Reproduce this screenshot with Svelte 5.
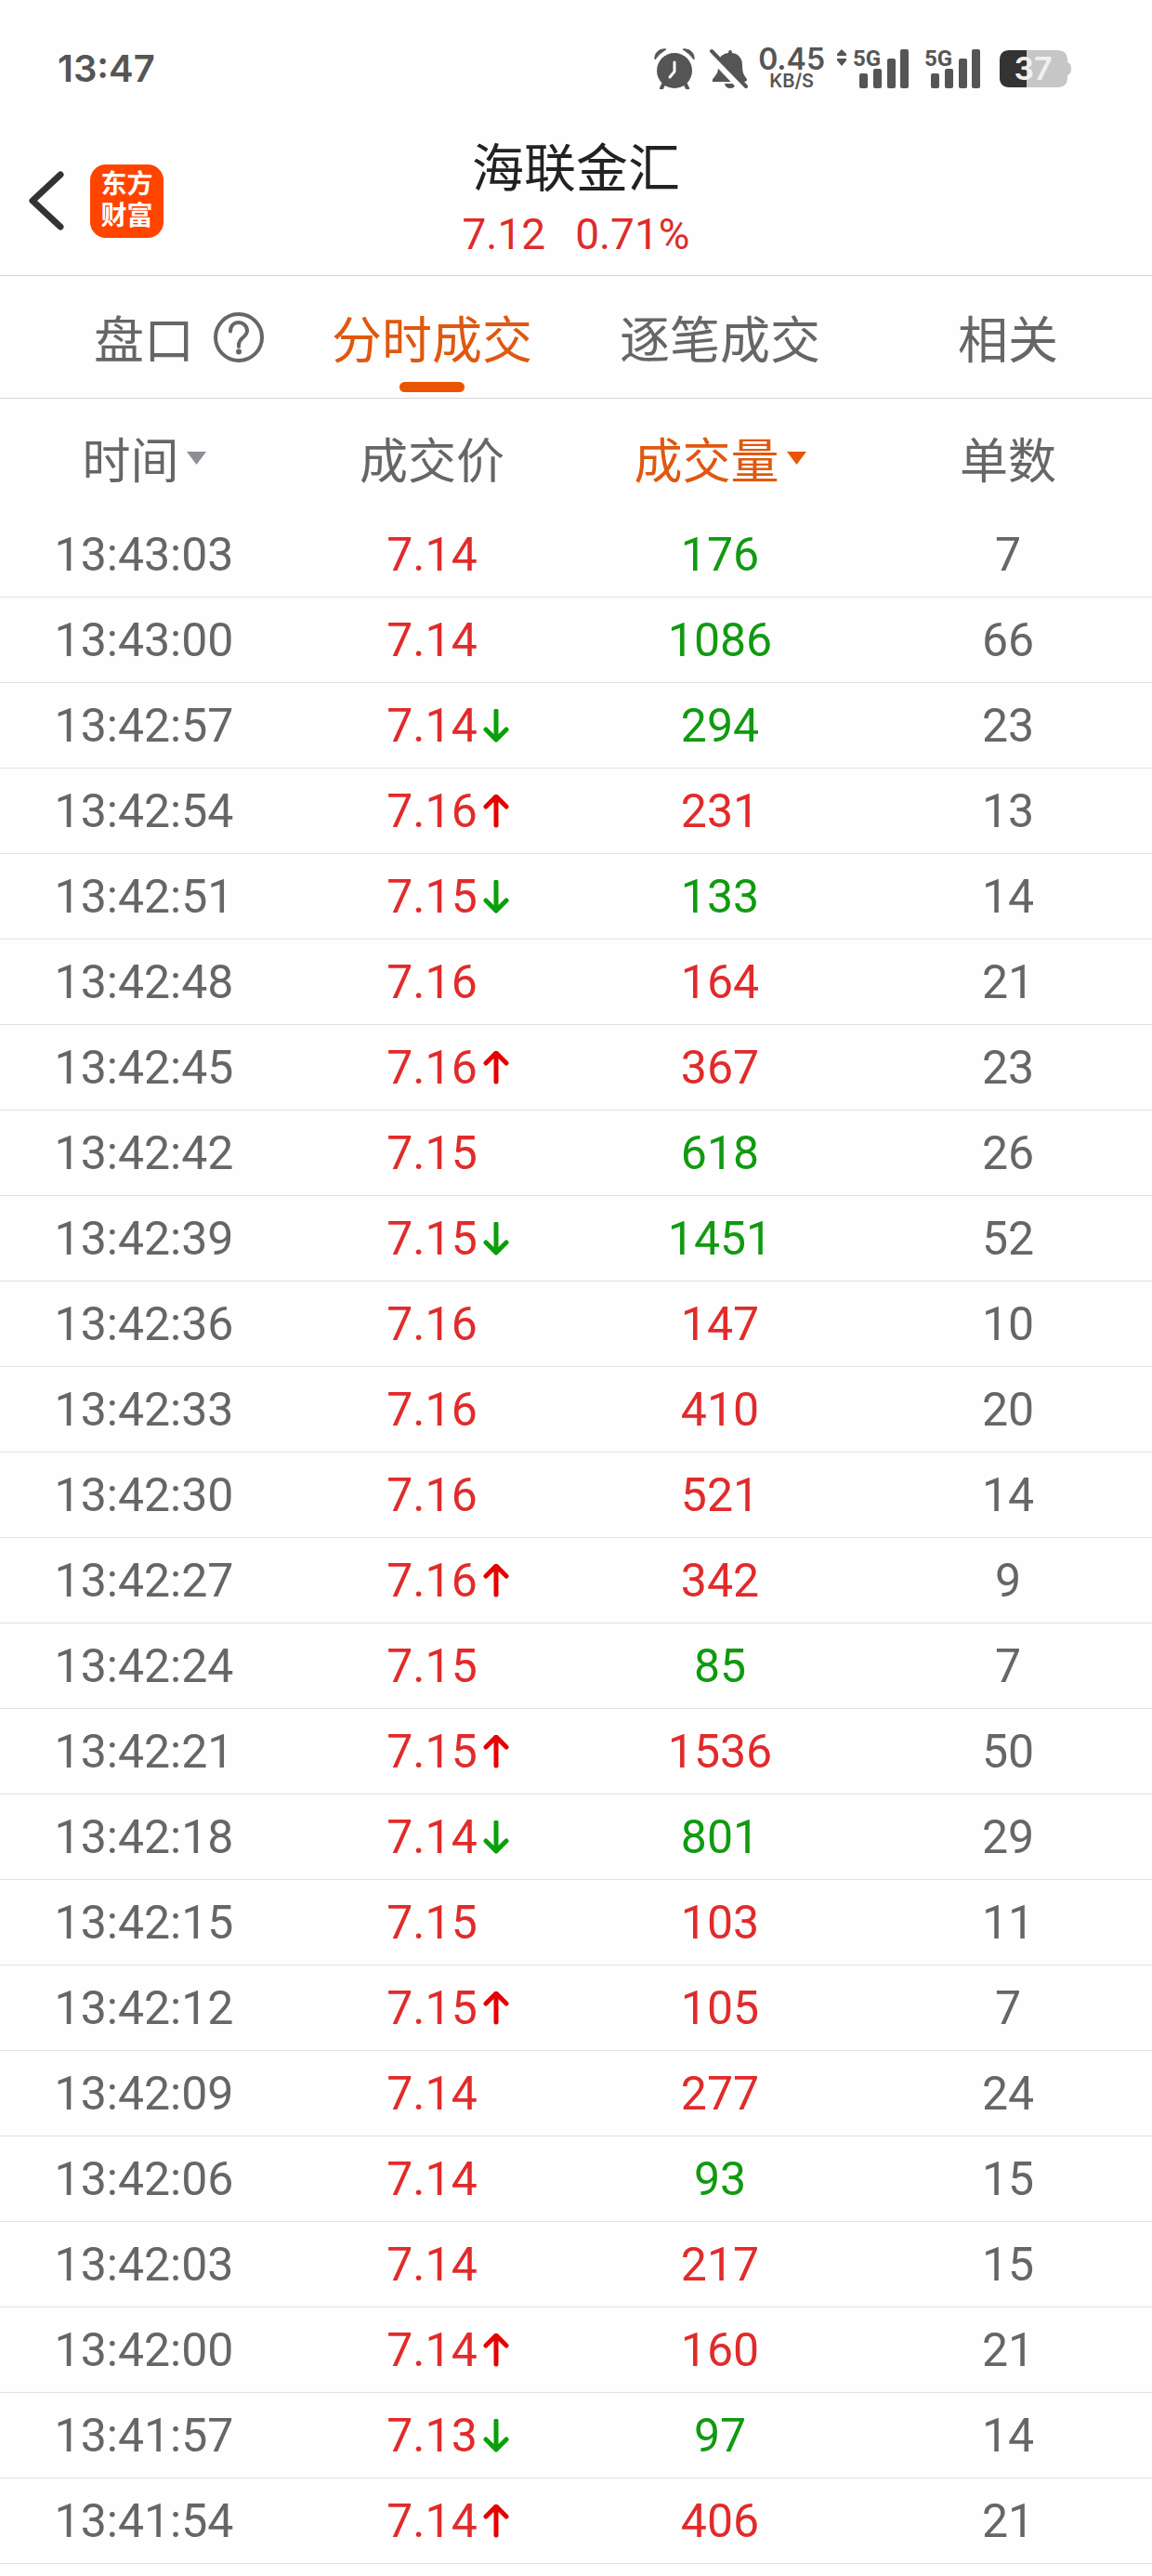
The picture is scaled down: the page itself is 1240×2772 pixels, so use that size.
<script lang="ts">
  type Side = 'buy' | 'sell';
  type Trend = 'up' | 'down' | '';

  interface Trade {
    time: string;
    price: string;
    trend: Trend;
    volume: number;
    side: Side;
    count: number;
  }

  const stock = { name: '海联金汇', price: '7.12', change: '0.71%' };

  const tabs = [
    { id: 'quote', label: '盘口', help: true },
    { id: 'minute', label: '分时成交', help: false },
    { id: 'tick', label: '逐笔成交', help: false },
    { id: 'related', label: '相关', help: false },
  ];

  let activeTab = $state('minute');

  function row(time: string, price: string, trend: Trend, volume: number, side: Side, count: number): Trade {
    return { time, price, trend, volume, side, count };
  }

  const trades: Trade[] = [
    row('13:43:03', '7.14', '', 176, 'sell', 7),
    row('13:43:00', '7.14', '', 1086, 'sell', 66),
    row('13:42:57', '7.14', 'down', 294, 'sell', 23),
    row('13:42:54', '7.16', 'up', 231, 'buy', 13),
    row('13:42:51', '7.15', 'down', 133, 'sell', 14),
    row('13:42:48', '7.16', '', 164, 'buy', 21),
    row('13:42:45', '7.16', 'up', 367, 'buy', 23),
    row('13:42:42', '7.15', '', 618, 'sell', 26),
    row('13:42:39', '7.15', 'down', 1451, 'sell', 52),
    row('13:42:36', '7.16', '', 147, 'buy', 10),
    row('13:42:33', '7.16', '', 410, 'buy', 20),
    row('13:42:30', '7.16', '', 521, 'buy', 14),
    row('13:42:27', '7.16', 'up', 342, 'buy', 9),
    row('13:42:24', '7.15', '', 85, 'sell', 7),
    row('13:42:21', '7.15', 'up', 1536, 'buy', 50),
    row('13:42:18', '7.14', 'down', 801, 'sell', 29),
    row('13:42:15', '7.15', '', 103, 'buy', 11),
    row('13:42:12', '7.15', 'up', 105, 'buy', 7),
    row('13:42:09', '7.14', '', 277, 'buy', 24),
    row('13:42:06', '7.14', '', 93, 'sell', 15),
    row('13:42:03', '7.14', '', 217, 'buy', 15),
    row('13:42:00', '7.14', 'up', 160, 'buy', 21),
    row('13:41:57', '7.13', 'down', 97, 'sell', 14),
    row('13:41:54', '7.14', 'up', 406, 'buy', 21),
  ];
</script>

{#snippet signal()}
  <svg class="signal" width="61" height="52" viewBox="0 -4 61 52" aria-hidden="true">
    <text x="0" y="19">5G</text>
    <rect x="7" y="27" width="9" height="16" rx="2" />
    <rect x="22" y="22" width="9" height="21" rx="2" />
    <rect x="37" y="11" width="9" height="32" rx="2" />
    <rect x="51" y="1" width="9" height="42" rx="2" />
  </svg>
{/snippet}

<div class="page">
  <div class="status-bar">
    <span class="clock">13:47</span>
    <div class="status-icons">
      <svg class="alarm" width="44" height="44" viewBox="0 0 44 44" aria-hidden="true">
        <path d="M1 12C0 5 6 0 13 1Q6 5 1 12ZM43 12C44 5 38 0 31 1Q38 5 43 12Z" stroke="#555" stroke-width="1" stroke-linejoin="round" />
        <circle cx="22" cy="24" r="19" />
        <path d="M11 37l-3 6M33 37l3 6" stroke="#555" stroke-width="4" stroke-linecap="round" />
        <path d="M22 15v10l-5 6" fill="none" stroke="#fefefe" stroke-width="3" stroke-linecap="round" stroke-linejoin="round" />
      </svg>
      <svg class="bell" width="42" height="44" viewBox="0 0 42 44" aria-hidden="true">
        <path d="M22 2q2 0 2 3c8 1 11 7 11 13 0 9 2 11 5 15q0 3-3 3H3q-1-2 1-4c5-6 5-7 5-15C9 10 13 6 20 5q0-3 2-3Z" />
        <path d="M16 38h12q-1 5-6 5t-6-5Z" />
        <path d="M-1 6L35 44" stroke="#fefefe" stroke-width="7" />
        <path d="M2 3L39 41" stroke="#555" stroke-width="4" stroke-linecap="round" />
      </svg>
      <div class="net-speed">
        <span class="net-value">0.45</span>
        <span class="net-unit">KB/S</span>
      </div>
      <div class="mobile">
        <svg class="updown" width="12" height="44" viewBox="0 0 12 44" aria-hidden="true">
          <path d="M6 1l5 5v2H1V6ZM6 19l5-6v-2H1v2Z" />
        </svg>
        {@render signal()}
      </div>
      {@render signal()}
      <svg class="battery" width="78" height="40" viewBox="0 0 78 40" role="img" aria-label="37">
        <path d="M11 0H62Q73 0 73 11V13Q77 14 77 20T73 27V29Q73 40 62 40H11Q0 40 0 29V11Q0 0 11 0Z" fill="#c6c6c6" />
        <path d="M11 0H29V40H11Q0 40 0 29V11Q0 0 11 0Z" fill="#333" />
        <text x="36" y="32" text-anchor="middle">37</text>
      </svg>
    </div>
  </div>

  <header class="header">
    <div class="header-left">
      <button class="back" aria-label="返回">
        <svg width="38" height="64" viewBox="0 0 38 64" aria-hidden="true">
          <path d="M34 4L4 32l30 28" />
        </svg>
      </button>
      <a class="logo" href="#home"><span>东方</span><span>财富</span></a>
    </div>
    <div class="stock">
      <h1 class="stock-name">{stock.name}</h1>
      <div class="stock-quote">
        <span>{stock.price}</span>
        <span>{stock.change}</span>
      </div>
    </div>
  </header>

  <nav class="tabs">
    {#each tabs as tab (tab.id)}
      <button class="tab" class:active={activeTab === tab.id} onclick={() => (activeTab = tab.id)}>
        <span class="tab-label">{tab.label}</span>
        {#if tab.help}
          <svg class="help" width="56" height="56" viewBox="0 0 56 56" aria-hidden="true">
            <circle cx="28" cy="28" r="25" />
            <path d="M19 21.500C19 8.500 37 9.500 37 21C37 28 28 28 28 36V38" />
            <circle class="dot" cx="28" cy="43.500" r="3" />
          </svg>
        {/if}
      </button>
    {/each}
  </nav>

  <table class="trades">
    <thead>
      <tr>
        <th>
          <button class="sort">
            时间
            <svg width="21" height="14" viewBox="0 0 21 14" aria-hidden="true"><path d="M0 0h21L10.500 14Z" /></svg>
          </button>
        </th>
        <th>成交价</th>
        <th>
          <button class="sort sorted">
            成交量
            <svg width="21" height="14" viewBox="0 0 21 14" aria-hidden="true"><path d="M0 0h21L10.500 14Z" /></svg>
          </button>
        </th>
        <th>单数</th>
      </tr>
    </thead>
    <tbody>
      {#each trades as trade (trade.time)}
        <tr>
          <td>{trade.time}</td>
          <td>
            <div class="price">
              <span class="price-value">{trade.price}</span>
              {#if trade.trend}
                <svg class="arrow {trade.trend}" width="28" height="36" viewBox="0 0 28 36" aria-hidden="true">
                  {#if trade.trend === 'up'}
                    <path d="M14 33V3M3 13L14 2l11 11" />
                  {:else}
                    <path d="M14 2v30M3 22l11 11 11-11" />
                  {/if}
                </svg>
              {/if}
            </div>
          </td>
          <td class={trade.side}>{trade.volume}</td>
          <td>{trade.count}</td>
        </tr>
      {/each}
    </tbody>
  </table>
</div>

<style>
  :global(body) {
    background: #fefefe;
  }

  .page {
    color: #666;
    font-family: Roboto, 'Noto Sans CJK SC', sans-serif;
  }

  button {
    padding: 0;
    border: none;
    background: none;
    color: inherit;
    font: inherit;
    cursor: pointer;
  }

  svg {
    display: block;
    flex: none;
  }

  .status-bar {
    display: flex;
    align-items: center;
    justify-content: space-between;
    box-sizing: border-box;
    height: 136px;
    padding: 12px 86px 0 62px;
    color: #555;
    font-family: Inter, Roboto, sans-serif;
    font-weight: 600;
  }

  .clock {
    font-size: 40px;
    line-height: 48px;
  }

  .status-icons {
    display: flex;
    align-items: center;
    gap: 16px;
  }

  .alarm,
  .bell,
  .updown,
  .signal {
    fill: #555;
  }

  .net-speed {
    display: flex;
    flex-direction: column;
    align-items: center;
    margin-left: -6px;
    margin-right: -4px;
  }

  .net-value {
    font-size: 32px;
    line-height: 26px;
  }

  .net-unit {
    font-size: 20px;
    line-height: 20px;
  }

  .mobile {
    display: flex;
    align-items: center;
    gap: 6px;
  }

  .signal text {
    font-family: Roboto, sans-serif;
    font-size: 24px;
    font-weight: 700;
  }

  .battery {
    margin-left: 4px;
  }

  .battery text {
    fill: #f0f0f0;
    font-size: 34px;
    font-weight: 600;
  }

  .header {
    display: grid;
    grid-template-columns: 1fr auto 1fr;
    align-items: center;
    height: 160px;
    padding: 0 31px;
    border-bottom: 1px solid #d4d4d4;
  }

  .header-left {
    display: flex;
    align-items: center;
    gap: 28px;
  }

  .back path {
    fill: none;
    stroke: #333;
    stroke-width: 7;
    stroke-linecap: round;
    stroke-linejoin: round;
  }

  .logo {
    display: flex;
    flex-direction: column;
    align-items: center;
    justify-content: center;
    width: 79px;
    height: 79px;
    border-radius: 17px;
    background: #ff4400;
    color: #fff;
    font-size: 28px;
    font-weight: 700;
    line-height: 34px;
    text-decoration: none;
  }

  .stock {
    text-align: center;
  }

  .stock-name {
    margin: 0;
    color: #222;
    font-size: 56px;
    font-weight: 400;
    line-height: 72px;
  }

  .stock-quote {
    display: flex;
    justify-content: center;
    gap: 32px;
    color: #dd2c2c;
    font-size: 46px;
    line-height: 68px;
  }

  .tabs {
    display: grid;
    grid-template-columns: repeat(4, 1fr);
    height: 131px;
    border-bottom: 1px solid #d4d4d4;
  }

  .tab {
    position: relative;
    display: grid;
    grid-template-columns: 1fr auto 1fr;
    align-items: center;
    font-size: 54px;
  }

  .tab-label {
    grid-column: 2;
  }

  .help {
    margin-left: 20px;
    fill: none;
    stroke: #666;
    stroke-width: 4;
    stroke-linecap: round;
  }

  .help .dot {
    fill: #666;
    stroke: none;
  }

  .tab.active {
    color: #e0580f;
  }

  .tab.active::after {
    content: '';
    position: absolute;
    bottom: 6px;
    left: 50%;
    width: 70px;
    height: 11px;
    margin-left: -35px;
    border-radius: 6px;
    background: #ea5504;
  }

  .trades {
    width: 100%;
    border-collapse: collapse;
    table-layout: fixed;
    font-size: 50px;
    text-align: center;
  }

  th {
    height: 121px;
    padding: 6px 0 0;
    box-sizing: border-box;
    font-size: 52px;
    font-weight: 400;
  }

  .sort {
    display: inline-flex;
    align-items: center;
    gap: 8px;
  }

  .sort svg {
    fill: #8e8e93;
  }

  .sorted {
    color: #e0580f;
  }

  .sorted svg {
    fill: #ea5504;
  }

  td {
    box-sizing: border-box;
    height: 92px;
    padding: 2px 0 0;
    border-bottom: 1px solid #e2e2e2;
  }

  .price {
    display: grid;
    grid-template-columns: 1fr auto 1fr;
    align-items: center;
    color: #e12b2b;
  }

  .price-value {
    grid-column: 2;
  }

  .arrow {
    margin-left: 6px;
    fill: none;
    stroke-width: 5;
    stroke-linecap: round;
    stroke-linejoin: round;
  }

  .arrow.up {
    stroke: #e60000;
  }

  .arrow.down {
    stroke: #09a009;
  }

  .buy {
    color: #e12b2b;
  }

  .sell {
    color: #109a10;
  }
</style>
